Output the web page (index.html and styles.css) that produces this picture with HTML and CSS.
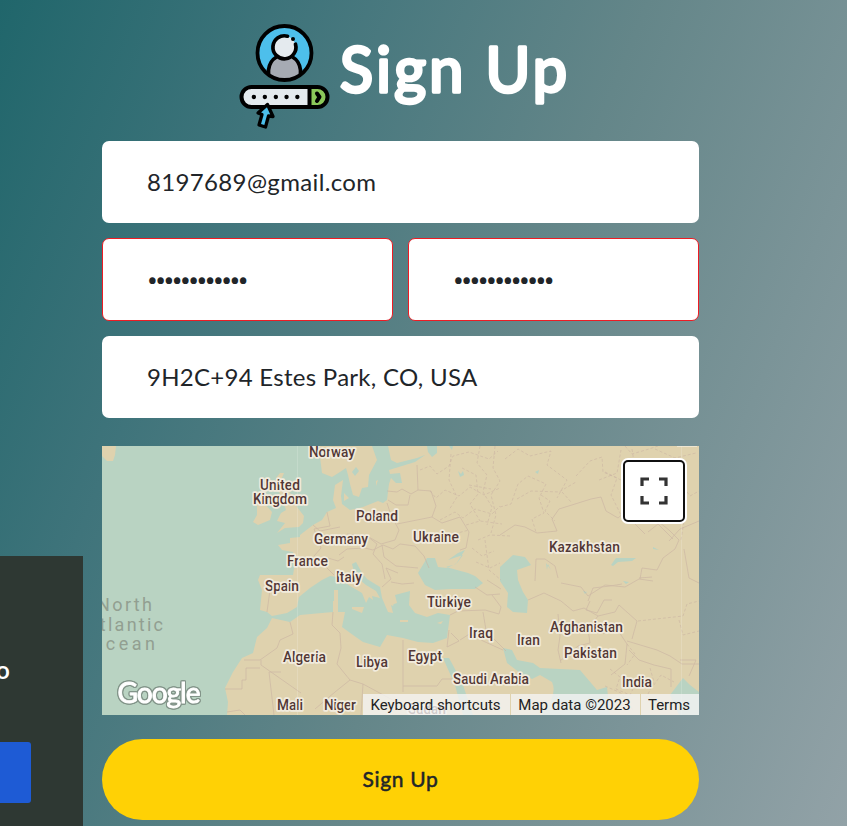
FILE: index.html
```html
<!DOCTYPE html>
<html lang="en">
<head>
<meta charset="utf-8">
<title>Sign Up</title>
<link rel="stylesheet" href="styles.css">
</head>
<body>
<main class="form">
  <header class="heading">
    <svg class="logo" width="92" height="108" viewBox="238 22 92 108">
      <circle cx="284.500" cy="53" r="27" fill="#4dbfeb"/>
      <path d="M269 75V71c0-19 31-19 31 0v4q-15.500 9-31 0Z" fill="#a6abb3"/>
      <path d="M268.500 74v-4q1-9 8-13M292.500 57q7 4 8 13v4" fill="none" stroke="#000" stroke-width="3.700"/>
      <circle cx="284.500" cy="47" r="11" fill="#e4eaee"/>
      <path d="M287.500 36.200a11.500 11.500 0 1 0 8 8" fill="none" stroke="#000" stroke-width="3.700" stroke-linecap="round"/>
      <circle cx="293" cy="39" r="2" fill="#000"/>
      <circle cx="284.500" cy="53" r="27" fill="none" stroke="#000" stroke-width="3.800"/>
      <rect x="241.500" y="87" width="86" height="20" rx="10" fill="#e4eaee"/>
      <path d="M309 87h8.500a10 10 0 0 1 0 20H309Z" fill="#8bc75a"/>
      <path d="M309.500 87v20" stroke="#000" stroke-width="4"/>
      <rect x="241.500" y="87" width="86" height="20" rx="10" fill="none" stroke="#000" stroke-width="4"/>
      <path d="m317 93.500 2.500 3.500-2.500 4" fill="none" stroke="#000" stroke-width="4" stroke-linecap="round" stroke-linejoin="round"/>
      <path d="M253.800 97h.1M264.800 97h.1M275.800 97h.1M286.500 97h.1M297.300 97h.1" stroke="#000" stroke-width="4.300" stroke-linecap="round"/>
      <path d="m267.500 104.500-9.500 8.500 4 1.500-3 10.500 6.500 2 3-11 4.500.5Z" fill="#4dbfeb" stroke="#000" stroke-width="3.300" stroke-linejoin="round"/>
    </svg>
    <h1><svg width="240" height="100" viewBox="0 0 240 100"><text x="10" y="70" textLength="227">Sign Up</text></svg></h1>
  </header>

  <div class="field email"><span>8197689@gmail.com</span></div>
  <div class="row">
    <div class="field invalid"><span class="dots">••••••••••••</span></div>
    <div class="field invalid"><span class="dots">••••••••••••</span></div>
  </div>
  <div class="field address"><span>9H2C+94 Estes Park, CO, USA</span></div>

  <section class="map">
    <svg width="597" height="269" viewBox="102 446 597 269">
      <g class="land">
        <path d="M102 446h14l-1 9-2 6h-6l-5-5Z"/>
        <path d="M314 446L320 457L322 473L332 477L340 472L346 468L348 475L350 484L353 495L359 497L362 488L368 487L369 475L377 460L372 446Z"/>
        <path d="M388 446L391 460L397 463L417 458L425 455L415 462L389 470L390 474L400 473L402 483L396 483L391 478L389 484L387 500L383 503L378 501L363 507L350 510L342 504L341 496L343 480L335 485L333 500L336 508L327 512L322 520L313 525L300 535V537L290 538V543L278 545L282 550L293 552L295 563L293 575L260 575L258 580L262 590L260 610L267 612L272 616L287 613L297 607L299 597L310 588L322 580L330 576L337 577L350 586L362 593L366 603L369 597L373 600L372 596L380 598L376 591L366 585L360 580L354 572L352 564L356 562L362 573L367 579L380 587L382 598L388 612L393 613L391 605L397 603L395 595L410 591L409 605L415 613L427 617L438 613L450 615L448 630L447 638L433 643L418 642L403 638L387 635L380 647L363 642L353 635L342 627L345 612L333 612L300 615L290 622L272 618L267 628L257 637L253 653L242 658L233 672L225 688L228 702L227 715H699V446Z"/>
        <path d="M280 473h4l-3 7 11 2-5 7 8 10 2 8 7 9-1 7-4 4-14 1-8 5 8-10-8-2 4-8 5-3-3-9-6-14-1-9Z"/>
        <path d="m257 505 7-2 8 9-2 8-12 5-5-3 4-7ZM334 590h4v11h-4ZM333 601h5v13h-5ZM352 607h12l-2 6-10-4ZM344 493l5 5-5 3ZM376 481l2-1-2 6ZM388 600l6 5-2 1ZM400 620h8v2h-8Z"/>
      </g>
      <g class="water">
        <path d="m418 573 9-15h8l3 9 9 1 10-5 6-8-15 5 10-7 7-3-9 14-10 3 22 6 7 3 8 7-8 6h-24l-16 1-10-5Z"/>
        <path d="m500 567 13-12 12 2 6 8-14 5 1 10 5 12 5 8-1 13-14-1-6-5 1-14-8-12Z"/>
        <path d="M443 658h6l13 24 11 33h-10l-8-30ZM503 648l9 2 5 10 16 3 7 5 40 2 17 20 10-3 3 28H542q16-20 10-33l-12-7-8 4-12-6-13-10ZM670 695l13-17 7 7 9 7v23h-20ZM611 565l5-7h20l-4 3-14 1-5 4ZM352 472l4-5 3 4-4 5ZM458 471l3 3 2-3 1 4-4 2ZM427 446h10v7l-5 4-4-5ZM449 446h4l-1 4ZM535 472l4-2-1 4ZM546 563l1 7 1-6 3 6ZM623 581l6 1-3 2ZM653 547l6 3-6-1ZM583 591l4 1-2 2Z"/>
      </g>
      <path class="land" d="M437 623l6-2-2 3Z"/>
      <g class="borders">
        <path d="M387 491l10 1 5-3 9 5 7-4-1-25M388 500l8 5h12l2-10M418 490l13 1 5 15-4 11-35 7M387 503l4 12 8 15-4 10-14 4-14-8-20-2M327 512l3 14-16 3 7 19-7 8M313 525l7 6 20-4M339 555l8-6 18-1 8 2 10-5 10 4 7-5 15 2 9 10 5 12M367 536l10 8-4 10 9 10 3 15M382 545l2 12 12 9 22 2M344 557l-6 4-10-3-4 7 10 10M382 587l9-8-5-11 12 5M391 582l11 2 12-1M432 517l10 6 18-6 9 15-3 16-6 2"/>
        <path d="M265 590h5l-3 22M333 612l-1 13 8 8 1 15-4 16 8 10 5 6-15 12-20 17M290 622l3 12-13 6-3 8-17 12h-16M261 660v5l40 28M260 668h-14v12h-4v9h-17M403 640v52M403 686h34l5-7h10M363 684l50 27M363 684l-2 31M269 672l5 43M269 672h12M227 712l13-2 5 5M350 680l13 4"/>
        <path d="M450 615l8-4 27-1 14 4 2-7-9-12M449 630l-2 17 12-6-8-8M460 640l11-7 12 8 20 9M483 612l3 18 8 9 12 12M475 587l12 8 13-1M487 580l14 9M528 600l16-7 17 8 12 10 11-3 14 8M558 578l-3-12-10-7h-9l-1 22M561 583l20 4 7 9 17-11 20 2 14-8 14 2M588 601l5-13 17-2 12-2M590 601l-4 9 11 3 7-13h8M598 616l-10 13 2 14-12 3-18 15M558 614l2 22-2 14 3 13M598 616l17-4 4-7 18 16-5 18M603 634l12-8 12 18-2 20-14 11M640 579l2-11 15 2 6-12 12-9 4-9-10-10-10-8-15-5M669 541l11-12 19-8M627 641l30 9 13 6 12 8h17M629 650l10 10 15 5 17 4v18M680 660h16l-7 16M639 578l13-1"/>
        <path d="M500 535l15-10 10 2 12 6 20-2-5-12 7-10 32-10 10-2 5 14 12 7 7-6 8 10 12 12M648 532l10-8 15 15M684 549l5 29 10 5"/>
      </g>
      <g class="borders regions">
        <path d="M420 470l10-4 7 8 12-8 4-10 16-4 20 7 9-8M430 491l6 7 9-8 14 6 11-9 14 8 16-7M440 520l15-8 8 6 12-9 17 5 8-8M451 454l-2 26 8 17-8 13M462 468l14 7 2 19-8 10 10 17M480 446l-3 17 10 12-4 17 9 15-5 18M495 446l-2 22 7 13-9 14 5 20-5 18M469 485l22 4M466 525l14-4 22 3M478 540l12-5 20 1M450 535l19-5M500 507l11-3 7-20 10-8 18 8-7 14 5 15-12 6 4 13M505 459l13-10 12 7 21-5-4 14 20 15-10 18M517 499l14-8 28 1 17-10M541 495l9 6-5 10 10 10M576 476l14-15 12-4 1 15 14 6-6 17 10 20M599 480l18-7 4-23M562 492l10 11M625 446l7 8 17-5 9-3M655 449l20 9 21-5M686 460l-6 22 10 14 9-5M632 449l3 20M605 472l16 8M684 522l-3 18"/>
        <path d="M472 548l10 8 12-5M476 562l14 6 10-5M485 540l4 30 12 10M638 621l45-5 4-12 12-3M679 620l4 15 16-4M610 669l10 8-4 12 14 6 6-12 15 6 10-14 13 7M605 686l16 7 12 17M627 644l8 10-8 11M650 668l4 14-8 16"/>
      </g>
      <path d="M297.500 446v269M681.500 446v269" stroke="#fff" stroke-opacity=".16"/>
      <g class="ocean">
        <text x="97" y="611" textLength="55">North</text>
        <text x="86" y="630.500" textLength="77">Atlantic</text>
        <text x="90" y="650" textLength="65">Ocean</text>
      </g>
      <g class="labels">
        <text x="309" y="456.500" textLength="46">Norway</text>
        <text x="260" y="490" textLength="40">United</text>
        <text x="253" y="504" textLength="54">Kingdom</text>
        <text x="356" y="520.500" textLength="42">Poland</text>
        <text x="314" y="543.500" textLength="54">Germany</text>
        <text x="413" y="542" textLength="46">Ukraine</text>
        <text x="549" y="552" textLength="71">Kazakhstan</text>
        <text x="287" y="566" textLength="41">France</text>
        <text x="336" y="582" textLength="26">Italy</text>
        <text x="265" y="591" textLength="34">Spain</text>
        <text x="427" y="606.500" textLength="44">Türkiye</text>
        <text x="469" y="638" textLength="24">Iraq</text>
        <text x="517" y="644.500" textLength="23">Iran</text>
        <text x="550" y="631.500" textLength="73">Afghanistan</text>
        <text x="564" y="658" textLength="53">Pakistan</text>
        <text x="283" y="662" textLength="43">Algeria</text>
        <text x="356" y="667" textLength="32">Libya</text>
        <text x="408" y="660.500" textLength="34">Egypt</text>
        <text x="453" y="683.500" textLength="76">Saudi Arabia</text>
        <text x="622" y="687" textLength="30">India</text>
        <text x="277" y="710" textLength="26">Mali</text>
        <text x="324" y="710" textLength="32">Niger</text>
        <text x="408" y="714" textLength="38">Sudan</text>
      </g>
      <g class="google">
        <text class="halo" x="117.500" y="703" textLength="83">Google</text>
      </g>
      <path d="M677 446h20v1h-20Z" fill="#f3eee0" opacity=".7"/>
    </svg>
    <button class="fullscreen" aria-label="Toggle fullscreen view">
      <svg width="28" height="28" viewBox="0 0 28 28"><path d="M2 9V2h7M19 2h7v7M26 19v7h-7M9 26H2v-7" fill="none" stroke="#333" stroke-width="3.200"/></svg>
    </button>
    <div class="credits"><span class="keys">Keyboard shortcuts</span><span class="data">Map data ©2023</span><span class="terms">Terms</span></div>
  </section>

  <button class="submit">Sign Up</button>
</main>
<aside class="notice"><p>to</p><div class="accept"></div></aside>
</body>
</html>
```
FILE: styles.css
```css
* { box-sizing: border-box; }
body {
  margin: 0;
  height: 826px;
  overflow: hidden;
  position: relative;
  color: #212529;
  font-family: Lato, sans-serif;
  background: linear-gradient(112deg, #20666b 0%, #3f747b 25%, #648689 55%, #92a2a7 100%);
}
.form { width: 597px; margin-left: 102px; padding-top: 22px; }
.heading { display: flex; height: 119px; padding-left: 136px; }
.logo { flex: none; }
h1 { margin: 0; font-size: 61px; font-weight: 400; }
h1 svg { display: block; }
h1 text { fill: #fff; stroke: #fff; stroke-width: 3.4px; stroke-linejoin: round; }
.field {
  height: 82px;
  padding: 0 0 2px 45px;
  display: flex;
  align-items: center;
  background: #fff;
  border-radius: 7px;
  font-size: 24px;
  white-space: nowrap;
}
.email { letter-spacing: 0.35px; }
.address { letter-spacing: 0.28px; }
.row { display: grid; grid-template-columns: 1fr 1fr; gap: 15px; margin: 15px 0; }
.invalid { height: 83px; padding: 2px 0 0 44px; border: 1px solid #ed1c24; }
.dots { font: 32px/40px Roboto, sans-serif; letter-spacing: -2.55px; }
.map { position: relative; height: 269px; margin-top: 28px; overflow: hidden; background: #b9d3c2; }
.map > svg { display: block; }
.land { fill: #dfd2ae; }
.water { fill: #b9d3c2; }
.borders { fill: none; stroke: #c9b2a2; stroke-width: 0.8; opacity: 0.75; stroke-linejoin: round; }
.regions { stroke-dasharray: 3 2; opacity: 0.7; }
.labels { font: 500 13.8px Roboto, sans-serif; fill: #523735; stroke: #f1ebdd; stroke-width: 3.5px; stroke-linejoin: round; paint-order: stroke; }
.ocean { font: 18px Roboto, sans-serif; fill: #929f91; }
.google { font: 400 28px Lato, sans-serif; }
.halo {
  fill: #fff;
  stroke: #fff;
  stroke-width: 0.9px;
  filter: drop-shadow(1px 0 0 #829489) drop-shadow(-1px 0 0 #829489) drop-shadow(0 1px 0 #829489) drop-shadow(0 -1px 0 #829489);
}
.fullscreen {
  position: absolute;
  top: 14px;
  right: 14px;
  width: 62px;
  height: 62px;
  padding: 0;
  display: grid;
  place-items: center;
  background: #fff;
  border: 2px solid #101010;
  border-radius: 5px;
  box-shadow: 0 0 0 2px #fff;
}
.credits {
  position: absolute;
  right: 0;
  bottom: 0;
  display: flex;
  gap: 1px;
  height: 21px;
  font: 15px/22px Roboto, sans-serif;
  color: #222;
  white-space: nowrap;
}
.credits span { background: rgba(245, 245, 245, 0.78); padding-right: 2px; text-align: center; }
.credits .keys { width: 147px; }
.credits .data { width: 129px; }
.credits .terms { width: 58px; }
.submit {
  display: block;
  width: 100%;
  height: 81px;
  margin-top: 24px;
  padding: 0 0 2px;
  border: 0;
  border-radius: 41px;
  background: #ffd105;
  color: #212529;
  font: 400 21px Lato, sans-serif;
  letter-spacing: 0.7px;
  -webkit-text-stroke: 0.5px #212529;
}
.notice {
  position: absolute;
  left: 0;
  bottom: 0;
  width: 83px;
  height: 270px;
  padding-top: 99px;
  overflow: hidden;
  background: #2e3833;
}
.notice p { margin: 0 0 0 -14px; height: 32px; font: 600 24px/30px "Open Sans", sans-serif; color: #fff; }
.accept { width: 31px; height: 61px; margin-top: 55px; background: #1e5bd5; border-radius: 0 3px 3px 0; }
```
